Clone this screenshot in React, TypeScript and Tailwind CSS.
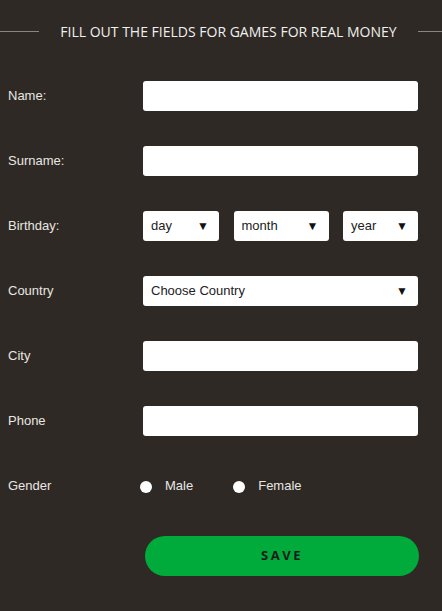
import React from "react";

const Arrow = () => (
  <span className="text-[12px] leading-none text-[#111]">▼</span>
);

const Input = () => (
  <div className="h-[30px] w-[275px] rounded-[3px] bg-white" />
);

const Select = ({ text, w }: { text: string; w: string }) => (
  <div className={`flex h-[30px] ${w} items-center justify-between rounded-[3px] bg-white pl-2 pr-[10px] text-[13px] text-[#222]`}>
    <span>{text}</span>
    <Arrow />
  </div>
);

const Row = ({ label, children }: { label: string; children: React.ReactNode }) => (
  <div className="mb-[35px] flex h-[30px] items-center">
    <div className="w-[135px] text-[13px] text-[#e8e6e3]">{label}</div>
    {children}
  </div>
);

export default function App() {
  return (
    <div
      className="min-h-screen w-full bg-[#2e2924]"
      style={{ fontFamily: '"Liberation Sans", Arial, sans-serif' }}
    >
      <div className="flex h-[62px] items-center">
        <div className="h-px w-[39px] bg-[#8a857f]" />
        <div
          className="flex-1 text-center text-[14px] font-medium text-[#f2f0ee]"
          style={{ fontFamily: '"Open Sans", sans-serif' }}
        >
          FILL OUT THE FIELDS FOR GAMES FOR REAL MONEY
        </div>
        <div className="h-px w-[24px] bg-[#8a857f]" />
      </div>
      <div className="pl-2 pt-[19px]">
        <Row label="Name:">
          <Input />
        </Row>
        <Row label="Surname:">
          <Input />
        </Row>
        <Row label="Birthday:">
          <div className="flex w-[275px] justify-between">
            <Select text="day" w="w-[76px]" />
            <Select text="month" w="w-[95px]" />
            <Select text="year" w="w-[75px]" />
          </div>
        </Row>
        <Row label="Country">
          <Select text="Choose Country" w="w-[275px]" />
        </Row>
        <Row label="City">
          <Input />
        </Row>
        <Row label="Phone">
          <Input />
        </Row>
        <div className="flex h-[30px] items-center">
          <div className="w-[132px] text-[13px] text-[#e8e6e3]">Gender</div>
          <div className="flex items-center text-[13px] text-[#e8e6e3]">
            <span className="mt-[2px] h-3 w-3 rounded-full bg-white" />
            <span className="ml-[13px]">Male</span>
            <span className="ml-[40px] mt-[2px] h-3 w-3 rounded-full bg-white" />
            <span className="ml-[13px]">Female</span>
          </div>
        </div>
        <div className="pl-[137px] pt-[35px]">
          <div
            className="flex h-10 w-[274px] items-center justify-center rounded-full bg-[#00ab3c] text-[13px] font-bold tracking-[2.5px] text-[#1a1a1a]"
            style={{ fontFamily: '"Open Sans", sans-serif' }}
          >
            SAVE
          </div>
        </div>
      </div>
    </div>
  );
}
